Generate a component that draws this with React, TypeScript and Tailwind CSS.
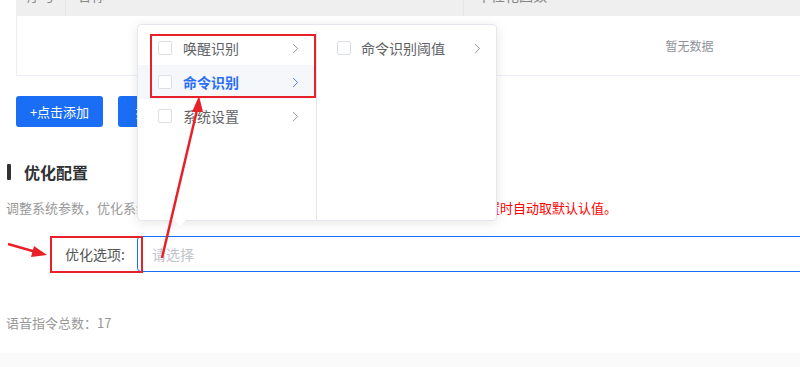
import { ChevronRight } from 'lucide-react'

const font = "font-['Noto_Sans_CJK_SC','Noto_Sans',sans-serif]"

function Checkbox() {
  return <span className="h-[14px] w-[14px] shrink-0 rounded-[2px] border border-[#dcdfe6] bg-white" />
}

function MenuItem({ label, active }: { label: string; active?: boolean }) {
  return (
    <div
      className={`flex h-[34px] items-center pl-[20px] pr-[12px] ${active ? 'bg-[#f5f7fa]' : ''}`}
    >
      <Checkbox />
      <span
        className={`ml-[11px] flex-1 text-[14px] ${
          active ? 'font-bold text-[#2a6ff5]' : 'text-[#606266]'
        }`}
      >
        {label}
      </span>
      <ChevronRight
        size={17}
        strokeWidth={1.2}
        className={active ? 'text-[#2a6ff5]' : 'text-[#808388]'}
      />
    </div>
  )
}

export default function App() {
  return (
    <div className={`relative flex h-[367px] w-[800px] flex-col overflow-hidden bg-white ${font}`}>
      {/* table */}
      <div className="-mt-[25px] ml-[16px] w-[1346px] shrink-0">
        <div className="flex h-[41px] items-center bg-[#efefef] text-[14px] text-[#888]">
          <div className="w-[50px] border-r border-[#e4e6ea] pl-[11px] leading-[41px]">序号</div>
          <div className="w-[398px] border-r border-[#e4e6ea] pl-[11px] leading-[41px]">名称</div>
          <div className="pl-[13px] leading-[41px]">中性化因数</div>
        </div>
        <div className="flex h-[60px] items-center justify-center border-b border-l border-[#ebeef5] text-[12px] text-[#909399]">
          暂无数据
        </div>
      </div>

      {/* buttons */}
      <div className="mt-[20px] ml-[16px] flex gap-[15px]">
        <button className="h-[31px] w-[87px] rounded-[3px] bg-[#1a6ef5] text-[13px] text-white">
          +点击添加
        </button>
        <button className="h-[31px] w-[87px] rounded-[3px] bg-[#1a6ef5] text-[13px] text-white">
          批量导入
        </button>
      </div>

      {/* section heading */}
      <div className="mt-[37px] ml-[7px] flex h-[16px] items-center">
        <span className="h-[16px] w-[4px] rounded-[1px] bg-[#333]" />
        <span className="ml-[13px] text-[16px] font-bold text-[#303133]">优化配置</span>
      </div>

      <p className="mt-[18px] ml-[6px] whitespace-nowrap text-[13px] leading-[20px] text-[#999]">
        调整系统参数，优化系统识别效果，提升交互体验。
        <span className="text-[#ff0000]">注意：参数修改后即生效，未配置时自动取默认认值。</span>
      </p>

      {/* form row */}
      <div className="mt-[18px] ml-[50px] flex h-[36px] items-center">
        <label className="w-[87px] shrink-0 pr-[12px] text-right text-[14px] text-[#555]">优化选项:</label>
        <div className="flex h-[36px] w-[720px] shrink-0 items-center rounded-[4px] border border-[#1a6ef5] pl-[14px] text-[14px] text-[#c0c4cc]">
          请选择
        </div>
      </div>

      <p className="mt-[41px] ml-[6px] text-[13px] leading-[20px] text-[#999]">语音指令总数：17</p>

      <div className="mt-[20px] flex-1 bg-[#fafafa]" />

      {/* cascader dropdown */}
      <div className="absolute left-[137px] top-[24px] flex h-[197px] w-[360px] rounded-[4px] border border-[#e4e7ed] bg-white pt-[6px] shadow-[0_2px_12px_rgba(0,0,0,0.1)]">
        <div className="w-[179px] border-r border-[#e4e7ed]">
          <MenuItem label="唤醒识别" />
          <MenuItem label="命令识别" active />
          <MenuItem label="系统设置" />
        </div>
        <div className="flex-1">
          <div className="flex h-[34px] items-center pl-[20px] pr-[10px]">
            <Checkbox />
            <span className="ml-[10px] flex-1 text-[14px] text-[#606266]">命令识别阈值</span>
            <ChevronRight size={17} strokeWidth={1.2} className="text-[#808388]" />
          </div>
        </div>
        <span className="absolute -bottom-[6px] left-[36px] h-0 w-0 border-x-[6px] border-t-[6px] border-x-transparent border-t-white" />
      </div>

      {/* annotations */}
      <div className="absolute left-[150px] top-[34px] h-[64px] w-[166px] border-2 border-[#e8202a]" />
      <div className="absolute left-[50px] top-[236px] h-[37px] w-[93px] border-2 border-[#e8202a]" />
      <svg className="pointer-events-none absolute left-0 top-0" width="800" height="367">
        <line x1="162" y1="258" x2="197" y2="110" stroke="#e8202a" strokeWidth="2.5" />
        <polygon points="199,96 192,112 203,112" fill="#e8202a" />
        <line x1="8" y1="244" x2="36" y2="252" stroke="#e8202a" strokeWidth="2.5" />
        <polygon points="47,255 34,246 31,257" fill="#e8202a" />
      </svg>
    </div>
  )
}
